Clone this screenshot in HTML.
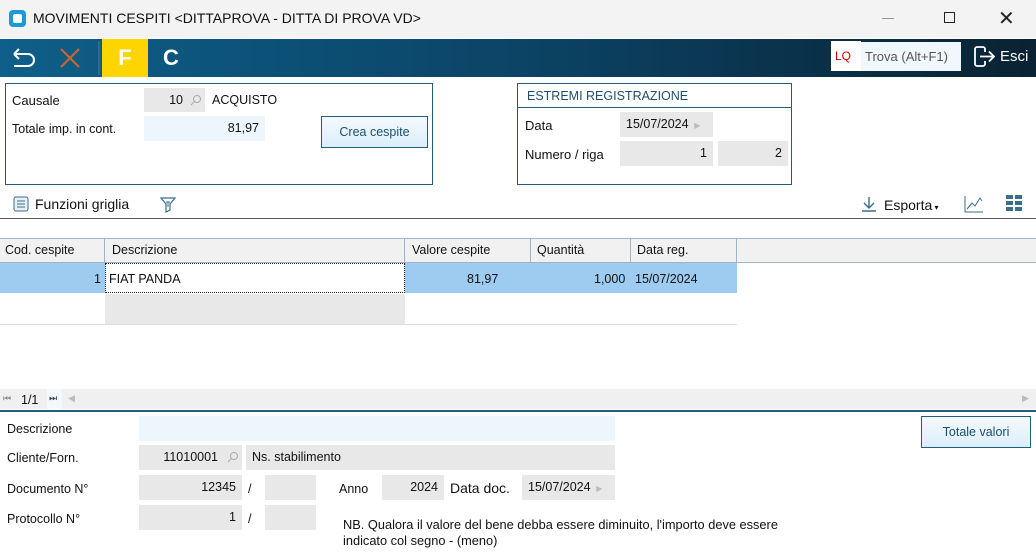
<!DOCTYPE html><html><head><meta charset="utf-8"><style>
*{margin:0;padding:0;box-sizing:border-box}
body{width:1036px;height:556px;overflow:hidden;background:#fff;font-family:"Liberation Sans",sans-serif;font-size:12px;color:#111;position:relative}
.a{position:absolute;white-space:nowrap}
.f{position:absolute;background:#e8e8e8;font-size:12.5px;line-height:25px;padding:0 6px}
.r{text-align:right}
.lb{position:absolute;font-size:12.5px}
</style></head><body>
<div class="a" style="left:0;top:0;width:1036px;height:38px;background:#f3f3f3"></div>
<div class="a" style="left:9px;top:10px;width:17px;height:17px;border-radius:4px;background:#1b9ad6"></div>
<div class="a" style="left:13px;top:14px;width:9px;height:9px;border-radius:2px;background:#fff"></div>
<div class="a" style="left:33px;top:10px;font-size:14px">MOVIMENTI CESPITI &lt;DITTAPROVA - DITTA DI PROVA VD&gt;</div>
<div class="a" style="left:882px;top:18px;width:12px;height:1px;background:#999"></div>
<div class="a" style="left:944px;top:12px;width:11px;height:11px;border:1.5px solid #222"></div>
<div class="a" style="left:998px;top:6px;font-size:20px;color:#222">✕</div>
<div class="a" style="left:0;top:39px;width:1036px;height:38px;background:linear-gradient(90deg,#0e5f8a,#0b4466 50%,#0a2233)"></div>
<svg class="a" style="left:10px;top:46px" width="28" height="24"><path d="M4 8h14a6 6 0 0 1 0 12H4M4 8l5-5M4 8l5 5" stroke="#fff" stroke-width="2" fill="none"/></svg>
<svg class="a" style="left:58px;top:46px" width="24" height="24"><path d="M3 3l18 18M21 3L3 21" stroke="#d2632e" stroke-width="2"/></svg>
<div class="a" style="left:98px;top:41px;width:2px;height:34px;background:#2a6e90"></div>
<div class="a" style="left:102px;top:39px;width:46px;height:38px;background:#ffd500;color:#fff;font-weight:bold;font-size:22px;text-align:center;line-height:38px">F</div>
<div class="a" style="left:163px;top:39px;color:#fff;font-weight:bold;font-size:22px;line-height:38px">C</div>
<div class="a" style="left:831px;top:41px;width:30px;height:30px;background:#fff;color:#c00;font-size:12px;line-height:30px;padding-left:4px">LQ</div>
<div class="a" style="left:861px;top:42px;width:100px;height:29px;background:#f0f7fd;color:#555;font-size:13px;line-height:29px;padding-left:4px">Trova (Alt+F1)</div>
<svg class="a" style="left:973px;top:45px" width="26" height="24"><path d="M12 7V4a2 2 0 0 0-2-2H4a2 2 0 0 0-2 2v15a2 2 0 0 0 2 2h6a2 2 0 0 0 2-2v-3" stroke="#fff" stroke-width="1.8" fill="none"/><path d="M7 11.5h14M16 6.5l5 5-5 5" stroke="#fff" stroke-width="1.8" fill="none"/></svg>
<div class="a" style="left:1000px;top:48px;color:#fff;font-size:15px">Esci</div>

<div class="a" style="left:5px;top:83px;width:428px;height:102px;border:1px solid #1f5f7a"></div>
<div class="lb" style="left:12px;top:93px;font-size:13px">Causale</div>
<div class="f r" style="left:144px;top:88px;width:61px;height:24px;padding-right:22px;line-height:24px">10</div>
<svg class="a" style="left:190px;top:94px" width="12" height="12"><circle cx="7" cy="5" r="3.5" stroke="#aaa" fill="none"/><path d="M4.5 7.5L1 11" stroke="#aaa"/></svg>
<div class="lb" style="left:212px;top:93px">ACQUISTO</div>
<div class="lb" style="left:12px;top:122px">Totale imp. in cont.</div>
<div class="f r" style="left:144px;top:116px;width:121px;height:25px;background:#eef6fd">81,97</div>
<div class="a" style="left:321px;top:116px;width:107px;height:32px;border:1px solid #1f5f7a;background:linear-gradient(#f4f9fd,#dceefb);color:#1c4f6f;font-size:12.5px;text-align:center;line-height:30px">Crea cespite</div>

<div class="a" style="left:517px;top:83px;width:275px;height:102px;border:1px solid #1f5f7a"></div>
<div class="a" style="left:517px;top:107px;width:275px;height:1px;background:#1f5f7a"></div>
<div class="lb" style="left:527px;top:89px;color:#1c4f6f">ESTREMI REGISTRAZIONE</div>
<div class="lb" style="left:525px;top:118px;font-size:13px">Data</div>
<div class="f" style="left:620px;top:112px;width:93px;height:25px">15/07/2024 <span style="color:#bbb;font-size:8px">&nbsp;▶</span></div>
<div class="lb" style="left:525px;top:147px;font-size:13px">Numero / riga</div>
<div class="f r" style="left:620px;top:141px;width:93px;height:25px">1</div>
<div class="f r" style="left:718px;top:141px;width:70px;height:25px">2</div>

<svg class="a" style="left:12px;top:195px" width="18" height="18"><rect x="2" y="2" width="14" height="14" rx="2" fill="#e6f0f6" stroke="#3a6e8a"/><path d="M5 6h8M5 9h8M5 12h8" stroke="#3a6e8a"/></svg>
<div class="a" style="left:35px;top:196px;font-size:14px">Funzioni griglia</div>
<svg class="a" style="left:159px;top:195px" width="18" height="18"><path d="M2 3h14l-5 6v6l-4 2V9z" fill="none" stroke="#3a6e8a" stroke-width="1.2"/><path d="M7 7h4M9 7v5" stroke="#3a6e8a"/></svg>
<svg class="a" style="left:860px;top:195px" width="18" height="18"><path d="M9 2v11M4 8l5 5 5-5M2 16h14" stroke="#3a6e8a" stroke-width="1.4" fill="none"/></svg>
<div class="a" style="left:884px;top:197px;font-size:14px">Esporta<span style="font-size:8px"> ▾</span></div>
<svg class="a" style="left:963px;top:194px" width="22" height="20"><path d="M2 2v16h18" stroke="#3a6e8a" fill="none"/><path d="M4 15l5-6 3 3 5-8 2 3" stroke="#3a6e8a" fill="none"/></svg>
<svg class="a" style="left:1006px;top:195px" width="16" height="16"><rect x="0" y="0" width="7" height="4" fill="#3a6e8a"/><rect x="9" y="0" width="7" height="4" fill="#3a6e8a"/><rect x="0" y="6" width="7" height="4" fill="#3a6e8a"/><rect x="9" y="6" width="7" height="4" fill="#3a6e8a"/><rect x="0" y="12" width="7" height="4" fill="#3a6e8a"/><rect x="9" y="12" width="7" height="4" fill="#3a6e8a"/></svg>
<div class="a" style="left:0;top:218px;width:1036px;height:1px;background:#555"></div>

<div class="a" style="left:0;top:238px;width:1036px;height:25px;background:#f1f1f1;border-top:1px solid #a0b4c8;border-bottom:1px solid #a0b4c8"></div>
<div class="a" style="left:104px;top:238px;width:1px;height:25px;background:#a0b4c8"></div>
<div class="a" style="left:404px;top:238px;width:1px;height:25px;background:#a0b4c8"></div>
<div class="a" style="left:530px;top:238px;width:1px;height:25px;background:#a0b4c8"></div>
<div class="a" style="left:630px;top:238px;width:1px;height:25px;background:#a0b4c8"></div>
<div class="a" style="left:736px;top:238px;width:1px;height:25px;background:#a0b4c8"></div>
<div class="lb" style="left:5px;top:243px">Cod. cespite</div>
<div class="lb" style="left:112px;top:243px">Descrizione</div>
<div class="lb" style="left:412px;top:243px">Valore cespite</div>
<div class="lb" style="left:537px;top:243px">Quantità</div>
<div class="lb" style="left:637px;top:243px">Data reg.</div>
<div class="a" style="left:0;top:263px;width:737px;height:30px;background:#9ecbf0"></div>
<div class="a" style="left:105px;top:263px;width:300px;height:30px;background:#fff;border:1px dotted #222"></div>
<div class="lb" style="left:94px;top:272px">1</div>
<div class="lb" style="left:109px;top:272px">FIAT PANDA</div>
<div class="lb" style="left:467px;top:272px">81,97</div>
<div class="lb" style="left:594px;top:272px">1,000</div>
<div class="lb" style="left:635px;top:272px">15/07/2024</div>
<div class="a" style="left:105px;top:294px;width:300px;height:30px;background:#e8e8e8"></div>
<div class="a" style="left:0;top:324px;width:737px;height:1px;background:#ddd"></div>

<div class="a" style="left:0;top:389px;width:1036px;height:20px;background:#f0f0f0"></div>
<div class="a" style="left:47px;top:389px;width:15px;height:20px;background:#f4f9fd"></div>
<div class="a" style="left:3px;top:393px;font-size:9px;color:#888">⏮</div>
<div class="lb" style="left:21px;top:393px">1/1</div>
<div class="a" style="left:49px;top:393px;font-size:9px;color:#345">⏭</div>
<div class="a" style="left:68px;top:393px;font-size:9px;color:#bbb">◀</div>
<div class="a" style="left:1022px;top:393px;font-size:9px;color:#bbb">▶</div>
<div class="a" style="left:0;top:410px;width:1036px;height:2px;background:#1f5f7a"></div>

<div class="lb" style="left:7px;top:422px">Descrizione</div>
<div class="f" style="left:139px;top:416px;width:476px;height:25px;background:#eef6fd"></div>
<div class="lb" style="left:7px;top:451px">Cliente/Forn.</div>
<div class="f r" style="left:139px;top:445px;width:103px;height:25px;padding-right:24px">11010001</div>
<svg class="a" style="left:227px;top:451px" width="12" height="12"><circle cx="7" cy="5" r="3.5" stroke="#aaa" fill="none"/><path d="M4.5 7.5L1 11" stroke="#aaa"/></svg>
<div class="f" style="left:246px;top:445px;width:369px;height:25px">Ns. stabilimento</div>
<div class="lb" style="left:7px;top:482px">Documento N°</div>
<div class="f r" style="left:139px;top:475px;width:103px;height:25px">12345</div>
<div class="lb" style="left:248px;top:482px">/</div>
<div class="f" style="left:265px;top:475px;width:51px;height:25px"></div>
<div class="lb" style="left:339px;top:482px">Anno</div>
<div class="f r" style="left:382px;top:475px;width:62px;height:25px">2024</div>
<div class="lb" style="left:450px;top:480px;font-size:14px">Data doc.</div>
<div class="f" style="left:522px;top:475px;width:93px;height:25px">15/07/2024 <span style="color:#bbb;font-size:8px">&nbsp;▶</span></div>
<div class="lb" style="left:7px;top:512px">Protocollo N°</div>
<div class="f r" style="left:139px;top:505px;width:103px;height:25px">1</div>
<div class="lb" style="left:248px;top:512px">/</div>
<div class="f" style="left:265px;top:505px;width:51px;height:25px"></div>
<div class="lb" style="left:343px;top:517px;line-height:16px;font-size:12.8px">NB. Qualora il valore del bene debba essere diminuito, l'importo deve essere<br>indicato col segno - (meno)</div>
<div class="a" style="left:921px;top:416px;width:110px;height:32px;border:1px solid #1f5f7a;background:linear-gradient(#f4f9fd,#dceefb);color:#1c4f6f;font-size:12.5px;text-align:center;line-height:30px">Totale valori</div>
</body></html>
